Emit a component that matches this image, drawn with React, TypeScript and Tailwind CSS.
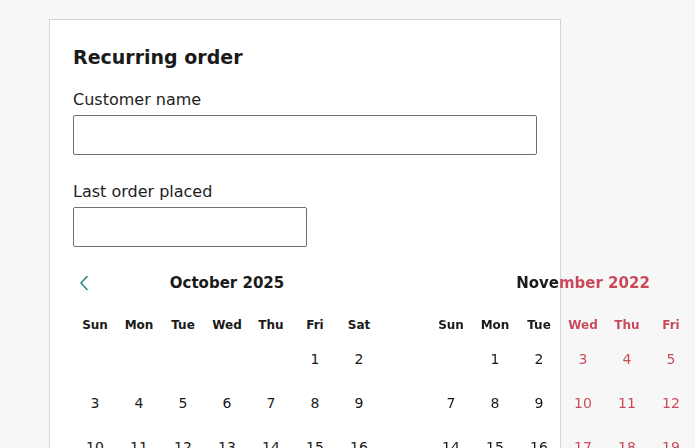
import React from "react";

const weekdays = ["Sun", "Mon", "Tue", "Wed", "Thu", "Fri", "Sat"];

const october: (number | null)[] = [
  null, null, null, null, null, 1, 2,
  ...Array.from({ length: 29 }, (_, i) => i + 3),
];
const november: (number | null)[] = [
  null,
  ...Array.from({ length: 30 }, (_, i) => i + 1),
];

const font = { fontFamily: "'DejaVu Sans', sans-serif" };

const Chevron = ({ flip = false }: { flip?: boolean }) => (
  <svg
    width="10"
    height="16"
    viewBox="0 0 10 16"
    fill="none"
    className={flip ? "rotate-180" : ""}
  >
    <path d="M8 1.5 2 8l6 6.5" stroke="#2b8a80" strokeWidth="1.6" strokeLinecap="round" strokeLinejoin="round" />
  </svg>
);

const Month = ({
  title,
  days,
  prev,
  next,
}: {
  title: string;
  days: (number | null)[];
  prev?: boolean;
  next?: boolean;
}) => (
  <div className="w-[308px] shrink-0">
    <div className="grid h-10 grid-cols-[1fr_auto_1fr] items-center">
      <div className="pl-[6px]">
        {prev && (
          <button className="flex items-center">
            <Chevron />
          </button>
        )}
      </div>
      <div className="text-[15px] font-bold">{title}</div>
      <div className="flex justify-end pr-[6px]">
        {next && (
          <button className="flex items-center">
            <Chevron flip />
          </button>
        )}
      </div>
    </div>
    <div className="mt-[9px] grid h-[25px] grid-cols-7 items-center text-center text-[12px] font-bold">
      {weekdays.map((d) => (
        <div key={d}>{d}</div>
      ))}
    </div>
    <div className="grid grid-cols-7 text-center text-[14px]">
      {days.map((d, i) => (
        <div key={i} className="flex h-11 items-center justify-center">
          {d ?? ""}
        </div>
      ))}
    </div>
  </div>
);

export default function App() {
  return (
    <div className="h-[448px] w-full overflow-hidden bg-[#f7f7f7] pl-[49px] pt-[19px] text-[#1a1a1a]" style={font}>
      <div className="w-[512px] border border-[#d4d4d4] bg-white p-[23px] pb-10">
        <h1 className="text-[19px] font-bold leading-7">Recurring order</h1>
        <label className="mb-[3px] mt-[17px] block text-[16px] leading-6 text-[#222]">Customer name</label>
        <input className="block h-10 w-full rounded-[2px] border border-[#707070] px-3 outline-none" />
        <label className="mb-[3px] mt-[25px] block text-[16px] leading-6 text-[#222]">Last order placed</label>
        <input className="block h-10 w-[234px] rounded-[2px] border border-[#707070] px-3 outline-none" />
        <div className="mt-4 flex gap-12">
          <Month title="October 2025" days={october} prev />
          <div className="bg-[linear-gradient(90deg,#1a1a1a_131px,#c8485a_131px)] bg-clip-text text-transparent">
            <Month title="November 2022" days={november} next />
          </div>
        </div>
      </div>
    </div>
  );
}
